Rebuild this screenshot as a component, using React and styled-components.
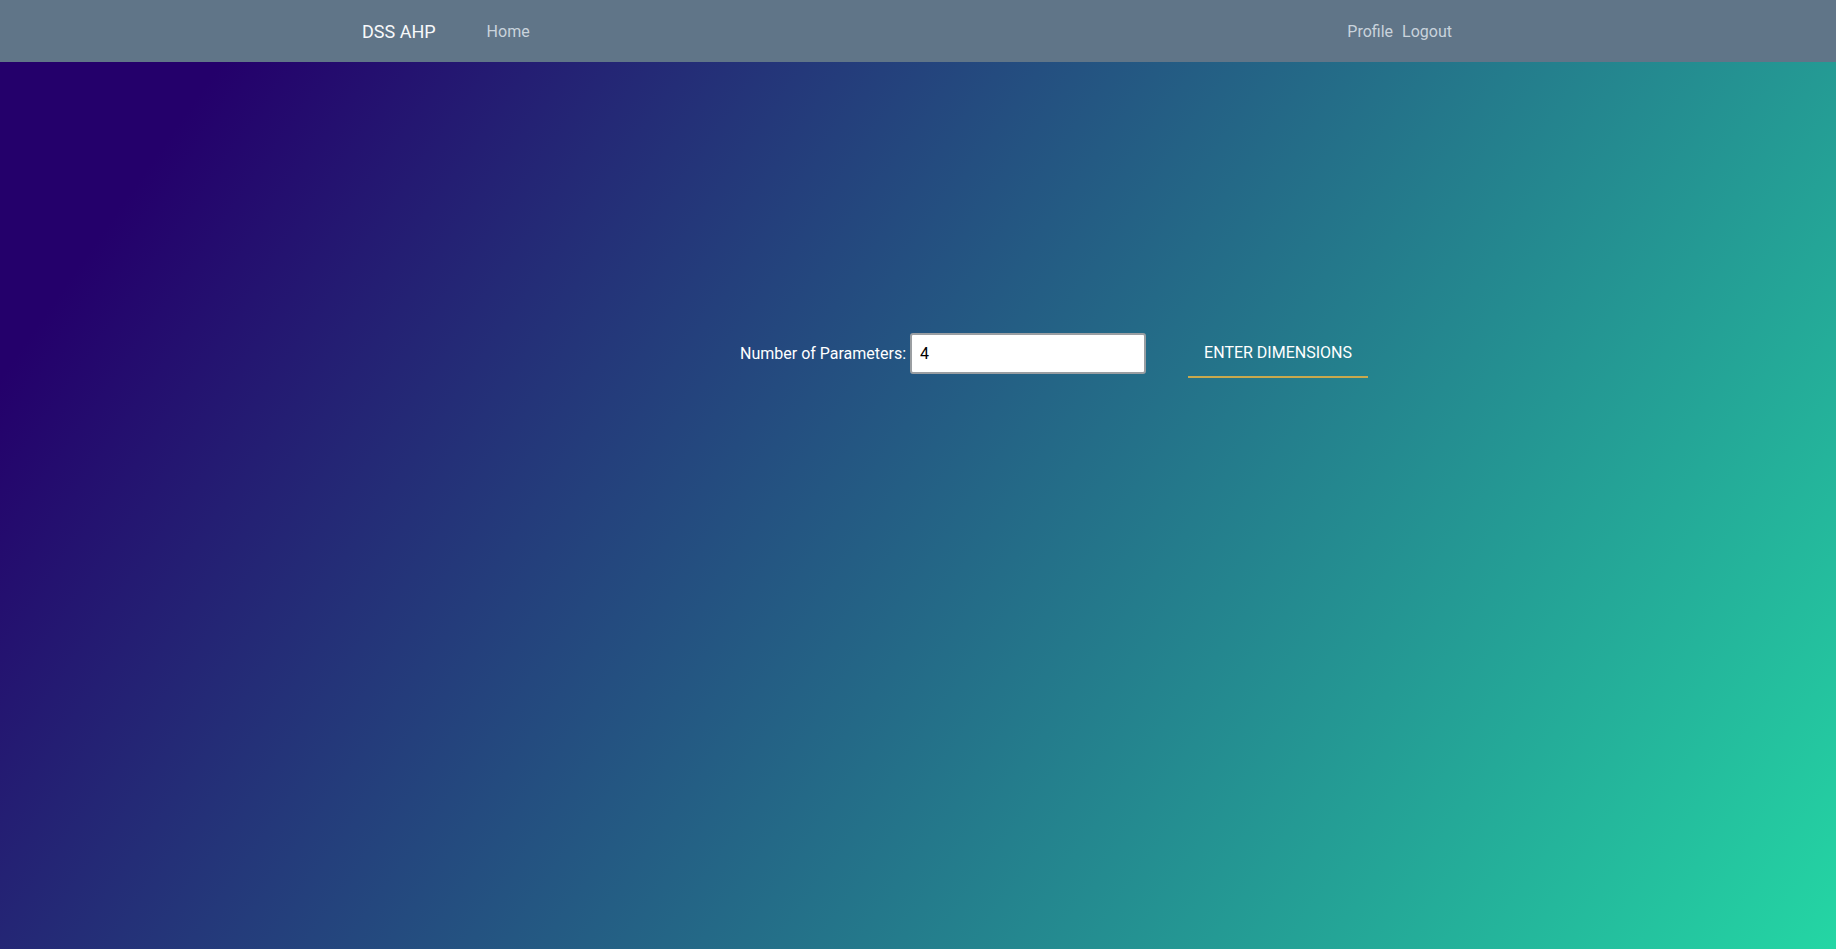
import React, { useState } from 'react'
import styled, { createGlobalStyle } from 'styled-components'

const GlobalStyle = createGlobalStyle`
    html, body {
        margin: 0;
        padding: 0;
        height: 100%;
    }
    body {
        font-family: Roboto, 'Liberation Sans', sans-serif;
        font-size: 16px;
        background: #607588;
    }
    #root {
        min-height: 100vh;
        display: flex;
        flex-direction: column;
    }
`;

export default function App() {
    const [params, setParams] = useState('4');

    return (
        <>
            <GlobalStyle />
            <NavBar>
                <NavInner>
                    <Brand href='#'>DSS AHP</Brand>
                    <NavLink href='#'>Home</NavLink>
                    <NavRight>
                        <NavLink href='#'>Profile</NavLink>
                        <NavLink href='#'>Logout</NavLink>
                    </NavRight>
                </NavInner>
            </NavBar>
            <Page>
                <FormRow onSubmit={e => e.preventDefault()}>
                    <Label htmlFor='params'>Number of Parameters:</Label>
                    <NumberInput
                        id='params'
                        type='text'
                        value={params}
                        onChange={e => setParams(e.target.value)}
                    />
                    <SubmitButton type='submit'>Enter Dimensions</SubmitButton>
                </FormRow>
            </Page>
        </>
    )
}

const NavBar = styled.nav`
    height: 62px;
    background-color: #607588;
    display: flex;
    align-items: center;
    flex-shrink: 0;
`;

const NavInner = styled.div`
    width: 1140px;
    margin: 0 auto;
    padding: 0 36px 0 14px;
    box-sizing: border-box;
    display: flex;
    align-items: center;
    gap: 51px;
`;

const Brand = styled.a`
    font-size: 18px;
    color: #f7f9fb;
    text-decoration: none;
    white-space: nowrap;
`;

const NavLink = styled.a`
    font-size: 16px;
    color: #c9d3dc;
    text-decoration: none;
`;

const NavRight = styled.div`
    margin-left: auto;
    display: flex;
    gap: 9px;
`;

const Page = styled.main`
    flex: 1;
    background: linear-gradient(125deg, #24006b 9%, #24d6a4 100%);
    padding-top: 266px;
`;

const FormRow = styled.form`
    width: 1140px;
    margin: 0 auto;
    padding-left: 392px;
    box-sizing: border-box;
    display: flex;
    align-items: center;
`;

const Label = styled.label`
    color: #ffffff;
    font-size: 16px;
    margin-right: 4px;
`;

const NumberInput = styled.input`
    width: 236px;
    height: 41px;
    box-sizing: border-box;
    border: 2px solid #9a9ea2;
    border-radius: 3px;
    padding: 0 8px;
    font-family: Roboto, 'Liberation Sans', sans-serif;
    font-size: 16px;
    color: #000;
    background: #fff;
    outline: none;
`;

const SubmitButton = styled.button`
    margin-left: 42px;
    height: 50px;
    padding: 0 16px;
    background: transparent;
    border: none;
    border-bottom: 2px solid #c9a94d;
    color: #ffffff;
    font-family: Roboto, 'Liberation Sans', sans-serif;
    font-size: 16px;
    text-transform: uppercase;
    cursor: pointer;
`;
